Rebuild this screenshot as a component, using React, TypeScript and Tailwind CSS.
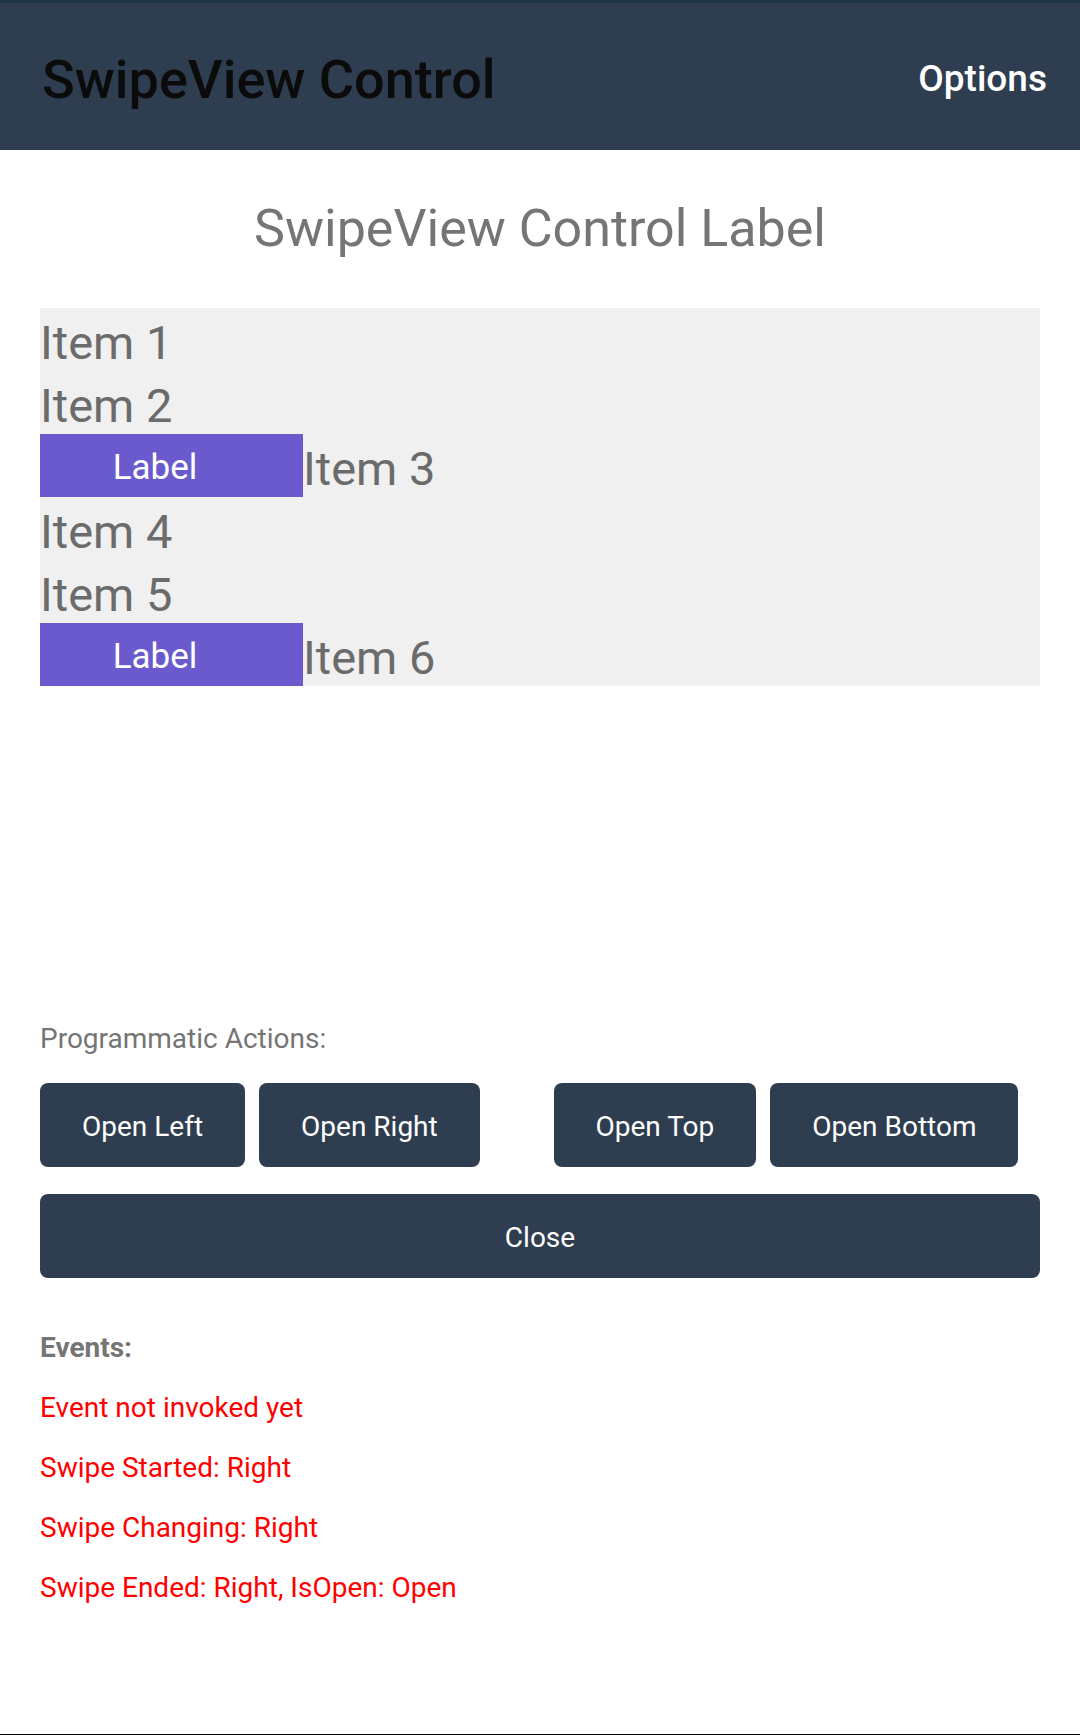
const ITEMS = [
  { label: "Item 1", swiped: false },
  { label: "Item 2", swiped: false },
  { label: "Item 3", swiped: true },
  { label: "Item 4", swiped: false },
  { label: "Item 5", swiped: false },
  { label: "Item 6", swiped: true },
];

const EVENTS = [
  "Event not invoked yet",
  "Swipe Started: Right",
  "Swipe Changing: Right",
  "Swipe Ended: Right, IsOpen: Open",
];

const ActionButton = ({ title }: { title: string }) => (
  <button className="h-[84px] px-[42px] pt-[4px] rounded-[8px] bg-[#2e3e50] text-white text-[28px] leading-none whitespace-nowrap">
    {title}
  </button>
);

const App = () => {
  return (
    <div
      className="min-h-[1735px] flex flex-col bg-white"
      style={{ fontFamily: "Roboto, 'Noto Sans', sans-serif" }}
    >
      {/* Toolbar */}
      <header className="h-[150px] border-t-[3px] border-[#1f3349] bg-[#2e3e50] flex items-center justify-between pl-[42px] pr-[33px]">
        <h1 className="pt-[6px] text-[54px] font-medium leading-[64px] text-[#0b0b0b]">
          SwipeView Control
        </h1>
        <span className="pt-[4px] text-[37px] font-medium leading-[48px] text-white">
          Options
        </span>
      </header>

      <main className="flex flex-col px-[40px]">
        <p className="mt-[47px] text-center text-[52px] leading-[64px] text-[#757575]">
          SwipeView Control Label
        </p>

        {/* SwipeView list */}
        <div className="mt-[47px] bg-[#f0f0f0] flex flex-col">
          {ITEMS.map((item) => (
            <div key={item.label} className="h-[63px] flex">
              {item.swiped && (
                <div className="w-[263px] h-[63px] bg-[#6a5acd] flex justify-center pr-[33px]">
                  <span className="pt-[11px] text-[35px] leading-[46px] text-white">
                    Label
                  </span>
                </div>
              )}
              <span className="pt-[7px] text-[47px] leading-[56px] text-[#6b6b6b]">
                {item.label}
              </span>
            </div>
          ))}
        </div>

        <p className="mt-[337px] text-[28px] leading-[32px] text-[#757575]">
          Programmatic Actions:
        </p>

        <div className="mt-[28px] grid grid-cols-2 gap-x-[27px]">
          <div className="flex gap-[14px]">
            <ActionButton title="Open Left" />
            <ActionButton title="Open Right" />
          </div>
          <div className="flex gap-[14px]">
            <ActionButton title="Open Top" />
            <ActionButton title="Open Bottom" />
          </div>
        </div>

        <button className="mt-[27px] h-[84px] pt-[4px] w-full rounded-[8px] bg-[#2e3e50] text-white text-[28px] leading-none">
          Close
        </button>

        <p className="mt-[54px] text-[28px] font-bold leading-[32px] text-[#757575]">
          Events:
        </p>
        <div className="mt-[14px] flex flex-col">
          {EVENTS.map((ev) => (
            <p key={ev} className="text-[28px] leading-[60px] text-[#ff0000]">
              {ev}
            </p>
          ))}
        </div>
      </main>

      <div className="flex-1" />
      <div className="h-px bg-black" />
    </div>
  );
};

export default App;
